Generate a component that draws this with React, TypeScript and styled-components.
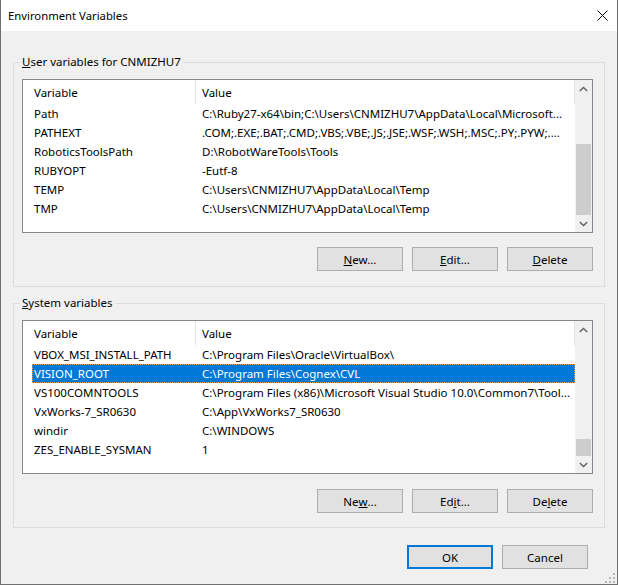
import * as React from 'react'
import styled, { createGlobalStyle } from 'styled-components'

const GlobalStyle = createGlobalStyle`
  html, body {
    margin: 0;
    padding: 0;
    background: #ffffff;
  }
  body {
    font-family: 'Noto Sans', sans-serif;
    font-size: 11.5px;
    color: #000000;
  }
`

const Window = styled.div`
  position: relative;
  width: 618px;
  height: 585px;
  box-sizing: border-box;
  border: 1px solid #707070;
  border-top: none;
  background: #f0f0f0;
  display: flex;
  flex-direction: column;
`

const TitleBar = styled.div`
  height: 31px;
  flex: none;
  background: #ffffff;
  display: flex;
  align-items: center;
  justify-content: space-between;
  padding: 0 9px 0 7px;
  font-size: 11.3px;
`

const Body = styled.div`
  flex: 1;
  display: flex;
  flex-direction: column;
  padding: 0 12px;
`

interface GroupProps {
  $top: number
  $bottom: number
}

const Group = styled.fieldset<GroupProps>`
  margin: ${(p) => p.$top}px 0 0;
  border: 1px solid #dcdcdc;
  padding: 9px 11px ${(p) => p.$bottom}px 8px;
  min-width: 0;
`

const Legend = styled.legend`
  padding: 0 2px;
  margin-left: -2px;
  line-height: 16px;
`

const Key = styled.span`
  text-decoration: underline;
`

const ListBox = styled.div`
  height: 154px;
  box-sizing: border-box;
  border: 1px solid #828790;
  background: #ffffff;
  display: flex;
`

const ListContent = styled.div`
  flex: 1;
  display: flex;
  flex-direction: column;
  overflow: hidden;
`

const Header = styled.div`
  height: 24px;
  flex: none;
  display: flex;
`

const HeaderCell = styled.div<{ $width?: number; $pad: number }>`
  ${(p) => (p.$width ? `width: ${p.$width}px; flex: none;` : 'flex: 1;')}
  box-sizing: border-box;
  padding-left: ${(p) => p.$pad}px;
  border-right: 1px solid #e5e5e5;
  display: flex;
  align-items: center;
`

const Row = styled.div<{ $selected?: boolean }>`
  height: 19px;
  flex: none;
  margin-left: 9px;
  display: flex;
  align-items: center;
  box-sizing: border-box;
  white-space: nowrap;
  background: ${(p) => (p.$selected ? '#0078d7' : 'transparent')};
  color: ${(p) => (p.$selected ? '#ffffff' : '#000000')};
  outline: ${(p) => (p.$selected ? '1px dotted #e3a15a' : 'none')};
  outline-offset: -1px;
`

const NameCell = styled.div`
  width: 164px;
  flex: none;
  padding-left: 2px;
  box-sizing: border-box;
  overflow: hidden;
`

const ValueCell = styled.div`
  flex: 1;
  padding-left: 6px;
  overflow: hidden;
`

const ScrollBar = styled.div`
  width: 17px;
  flex: none;
  background: #f0f0f0;
  display: flex;
  flex-direction: column;
`

const Arrow = styled.div`
  height: 17px;
  flex: none;
  display: flex;
  align-items: center;
  justify-content: center;
`

const Track = styled.div`
  flex: 1;
  display: flex;
  flex-direction: column;
  justify-content: flex-end;
`

const Thumb = styled.div<{ $height: number }>`
  height: ${(p) => p.$height}px;
  margin: 0 1px;
  background: #cdcdcd;
`

const ButtonRow = styled.div<{ $top: number; $right?: number }>`
  display: flex;
  justify-content: flex-end;
  gap: 9px;
  margin-top: ${(p) => p.$top}px;
  margin-right: ${(p) => p.$right ?? 0}px;
`

const Button = styled.div<{ $default?: boolean }>`
  width: 86px;
  height: 24px;
  box-sizing: border-box;
  border: ${(p) => (p.$default ? '2px solid #0078d7' : '1px solid #adadad')};
  background: #e1e1e1;
  display: flex;
  align-items: center;
  justify-content: center;
`

const Grip = styled.svg`
  position: absolute;
  right: 2px;
  bottom: 1px;
`

type Variable = [string, string]

const userVars: Variable[] = [
  ['Path', String.raw`C:\Ruby27-x64\bin;C:\Users\CNMIZHU7\AppData\Local\Microsoft...`],
  ['PATHEXT', '.COM;.EXE;.BAT;.CMD;.VBS;.VBE;.JS;.JSE;.WSF;.WSH;.MSC;.PY;.PYW;....'],
  ['RoboticsToolsPath', String.raw`D:\RobotWareTools\Tools`],
  ['RUBYOPT', '-Eutf-8'],
  ['TEMP', String.raw`C:\Users\CNMIZHU7\AppData\Local\Temp`],
  ['TMP', String.raw`C:\Users\CNMIZHU7\AppData\Local\Temp`],
]

const systemVars: Variable[] = [
  ['VBOX_MSI_INSTALL_PATH', 'C:\\Program Files\\Oracle\\VirtualBox\\'],
  ['VISION_ROOT', String.raw`C:\Program Files\Cognex\CVL`],
  ['VS100COMNTOOLS', String.raw`C:\Program Files (x86)\Microsoft Visual Studio 10.0\Common7\Tool...`],
  ['VxWorks-7_SR0630', String.raw`C:\App\VxWorks7_SR0630`],
  ['windir', String.raw`C:\WINDOWS`],
  ['ZES_ENABLE_SYSMAN', '1'],
]

const Chevron = ({ down }: { down?: boolean }) => (
  <svg width="9" height="6" viewBox="0 0 9 6">
    <path
      d={down ? 'M0.8 1 L4.5 4.6 L8.2 1' : 'M0.8 5 L4.5 1.4 L8.2 5'}
      fill="none"
      stroke="#606060"
      strokeWidth="1.4"
    />
  </svg>
)

const VariableList = ({
  vars,
  selected,
  thumb,
}: {
  vars: Variable[]
  selected?: number
  thumb: number
}) => (
  <ListBox>
    <ListContent>
      <Header>
        <HeaderCell $width={173} $pad={11}>
          Variable
        </HeaderCell>
        <HeaderCell $pad={6}>Value</HeaderCell>
      </Header>
      {vars.map(([name, value], i) => (
        <Row key={name} $selected={i === selected}>
          <NameCell>{name}</NameCell>
          <ValueCell>{value}</ValueCell>
        </Row>
      ))}
    </ListContent>
    <ScrollBar>
      <Arrow>
        <Chevron />
      </Arrow>
      <Track>
        <Thumb $height={thumb} />
      </Track>
      <Arrow>
        <Chevron down />
      </Arrow>
    </ScrollBar>
  </ListBox>
)

export default function App() {
  return (
    <>
      <GlobalStyle />
      <Window>
        <TitleBar>
          <span>Environment Variables</span>
          <svg width="11" height="11" viewBox="0 0 11 11">
            <path d="M0.5 0.5 L10.5 10.5 M10.5 0.5 L0.5 10.5" stroke="#000" strokeWidth="1" />
          </svg>
        </TitleBar>
        <Body>
          <Group $top={23} $bottom={15}>
            <Legend>
              <Key>U</Key>ser variables for CNMIZHU7
            </Legend>
            <VariableList vars={userVars} thumb={71} />
            <ButtonRow $top={14}>
              <Button>
                <Key>N</Key>ew...
              </Button>
              <Button>
                <Key>E</Key>dit...
              </Button>
              <Button>
                <Key>D</Key>elete
              </Button>
            </ButtonRow>
          </Group>
          <Group $top={8} $bottom={14}>
            <Legend>
              <Key>S</Key>ystem variables
            </Legend>
            <VariableList vars={systemVars} selected={1} thumb={17} />
            <ButtonRow $top={15}>
              <Button>
                Ne<Key>w</Key>...
              </Button>
              <Button>
                Ed<Key>i</Key>t...
              </Button>
              <Button>
                De<Key>l</Key>ete
              </Button>
            </ButtonRow>
          </Group>
          <ButtonRow $top={17} $right={17}>
            <Button $default>OK</Button>
            <Button>Cancel</Button>
          </ButtonRow>
        </Body>
        <Grip width="10" height="10" viewBox="0 0 10 10">
          <g fill="#b8b8b8">
            <rect x="8" y="0" width="2" height="2" />
            <rect x="4" y="4" width="2" height="2" />
            <rect x="8" y="4" width="2" height="2" />
            <rect x="0" y="8" width="2" height="2" />
            <rect x="4" y="8" width="2" height="2" />
            <rect x="8" y="8" width="2" height="2" />
          </g>
        </Grip>
      </Window>
    </>
  )
}
